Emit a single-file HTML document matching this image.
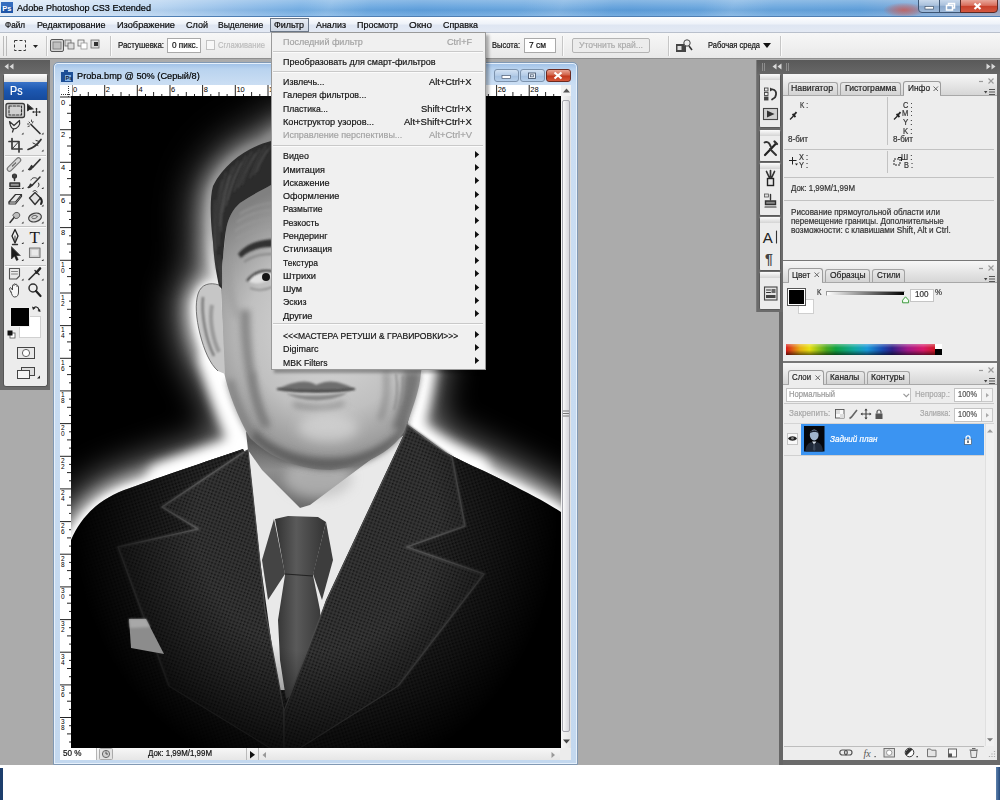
<!DOCTYPE html>
<html lang="ru">
<head>
<meta charset="utf-8">
<title>Adobe Photoshop CS3 Extended</title>
<style>
html,body{margin:0;padding:0;}
body{width:1000px;height:800px;overflow:hidden;background:#fff;position:relative;font-family:"Liberation Sans","DejaVu Sans",sans-serif;font-size:11px;color:#000;}
.abs{position:absolute;}
svg{display:block;overflow:visible;}
svg text{font-family:"Liberation Sans","DejaVu Sans",sans-serif;}
.t{position:absolute;white-space:nowrap;line-height:1;-webkit-text-stroke:0.2px currentColor;}
/* title bar */
#titlebar{left:0;top:0;width:1000px;height:17px;overflow:hidden;background:linear-gradient(90deg,#dce9f7 0%,#cfe1f5 8%,#b4d2f0 16%,#8dbbe8 24%,#6fabe2 31%,#5e9fdc 42%,#67a5de 52%,#5c9dda 63%,#69a6de 74%,#5f9fda 86%,#7aa6d6 93%,#9aa4c0 100%);border-bottom:1px solid #4f7fb4;box-sizing:border-box;}
#titlebar .sh{left:0;top:0;width:1000px;height:17px;background:linear-gradient(180deg,rgba(255,255,255,.28) 0,rgba(255,255,255,.08) 40%,rgba(0,0,0,.02) 60%,rgba(255,255,255,.18) 100%),linear-gradient(115deg,rgba(255,255,255,0) 30%,rgba(255,255,255,.16) 33%,rgba(255,255,255,0) 37%,rgba(255,255,255,0) 52%,rgba(255,255,255,.14) 56%,rgba(255,255,255,0) 61%,rgba(255,255,255,0) 70%,rgba(255,255,255,.12) 73%,rgba(255,255,255,0) 77%);}
#menubar{left:0;top:17px;width:1000px;height:16px;background:linear-gradient(180deg,#fdfeff 0,#eef2f9 45%,#dfe6f2 55%,#e3e9f4 100%);border-bottom:1px solid #b9c0cc;box-sizing:border-box;}
#menubar .t{top:3px;font-size:10.5px;color:#111;}
#optbar{left:0;top:33px;width:1000px;height:26px;background:linear-gradient(180deg,#f7f7f7 0,#f0f0f0 50%,#e8e8e8 100%);border-bottom:1px solid #8e8e8e;box-sizing:border-box;}
#work{left:0;top:59px;width:1000px;height:706px;background:#ababab;}
.sep{position:absolute;top:3px;width:1px;height:20px;background:#c6c6c6;border-right:1px solid #fafafa;}
.inp{position:absolute;background:#fff;border:1px solid #a9a9a9;box-sizing:border-box;font-size:9px;line-height:1;}
</style>
</head>
<body>
<div class="abs" id="titlebar"><div class="abs sh"></div>
<svg class="abs" style="left:1px;top:2px" width="12" height="12"><rect x="0" y="0" width="12" height="11" fill="#1f56a8"/><rect x="0" y="0" width="12" height="5" fill="#4a84d4" opacity=".5"/><text x="1.2" y="8.8" font-size="7.5" font-weight="bold" fill="#fff">Ps</text></svg>
<div class="t" style="left:17.0px;top:2.9px;font-size:9.8px;color:#000;transform:scaleX(0.932);transform-origin:0 0;">Adobe Photoshop CS3 Extended</div>
<div class="abs" style="left:884px;top:3px;width:40px;height:14px;background:radial-gradient(ellipse at center,rgba(214,84,70,.75) 0,rgba(214,84,70,.35) 45%,rgba(214,84,70,0) 75%);"></div>
<div class="abs" style="left:918px;top:-1px;width:22px;height:14px;border:1px solid #3e5674;border-radius:0 0 0 4px;background:linear-gradient(180deg,#c9d9ec 0,#a9c0dc 45%,#8aa8cc 50%,#9db8d8 100%);box-sizing:border-box;"></div>
<div class="abs" style="left:939px;top:-1px;width:22px;height:14px;border:1px solid #3e5674;background:linear-gradient(180deg,#c9d9ec 0,#a9c0dc 45%,#8aa8cc 50%,#9db8d8 100%);box-sizing:border-box;"></div>
<div class="abs" style="left:960px;top:-1px;width:37.5px;height:14px;border:1px solid #5a2a26;border-radius:0 0 4px 0;background:linear-gradient(180deg,#e8a79a 0,#d9705e 45%,#c7402a 52%,#d4573f 100%);box-sizing:border-box;"></div>
<svg class="abs" style="left:917px;top:0" width="83" height="14"><rect x="8" y="6.500" width="8.500" height="2.600" fill="#fff" stroke="#44546a" stroke-width=".7"/><path d="M29.500 5.500h6v4.500h-6zM31.500 5.500V3.500h6v4.500h-2" fill="none" stroke="#fff" stroke-width="1.500"/><path d="M57.500 3.500l6 5.500M63.500 3.500l-6 5.500" stroke="#fff" stroke-width="2.200"/></svg>
</div>
<div class="abs" id="menubar"></div>
<div class="abs" style="left:270px;top:18px;width:39px;height:14px;box-sizing:border-box;border:1px solid #6a7686;background:linear-gradient(180deg,#e6ebf3,#cdd5e2);"></div>
<div class="t" style="left:5.0px;top:19.9px;font-size:9.5px;color:#0a0a0a;transform:scaleX(0.856);transform-origin:0 0;">Файл</div>
<div class="t" style="left:36.5px;top:19.9px;font-size:9.5px;color:#0a0a0a;transform:scaleX(0.947);transform-origin:0 0;">Редактирование</div>
<div class="t" style="left:116.5px;top:19.9px;font-size:9.5px;color:#0a0a0a;transform:scaleX(0.969);transform-origin:0 0;">Изображение</div>
<div class="t" style="left:186.0px;top:19.9px;font-size:9.5px;color:#0a0a0a;transform:scaleX(0.952);transform-origin:0 0;">Слой</div>
<div class="t" style="left:218.4px;top:19.9px;font-size:9.5px;color:#0a0a0a;transform:scaleX(0.898);transform-origin:0 0;">Выделение</div>
<div class="t" style="left:274.4px;top:19.9px;font-size:9.5px;color:#0a0a0a;transform:scaleX(0.943);transform-origin:0 0;">Фильтр</div>
<div class="t" style="left:316.0px;top:19.9px;font-size:9.5px;color:#0a0a0a;transform:scaleX(0.935);transform-origin:0 0;">Анализ</div>
<div class="t" style="left:357.0px;top:19.9px;font-size:9.5px;color:#0a0a0a;transform:scaleX(0.945);transform-origin:0 0;">Просмотр</div>
<div class="t" style="left:409.0px;top:19.9px;font-size:9.5px;color:#0a0a0a;transform:scaleX(1.042);transform-origin:0 0;">Окно</div>
<div class="t" style="left:443.0px;top:19.9px;font-size:9.5px;color:#0a0a0a;transform:scaleX(0.939);transform-origin:0 0;">Справка</div>
<div class="abs" id="optbar">
<div class="abs" style="left:3px;top:3px;width:2px;height:20px;border-left:1px solid #bbb;border-right:1px solid #bbb;"></div>
<svg class="abs" style="left:12px;top:6px" width="30" height="16"><rect x="2.5" y="1.5" width="11" height="10" fill="none" stroke="#333" stroke-width="1" stroke-dasharray="3 2"/><path d="M21 6h5l-2.5 3z" fill="#222"/></svg>
<div class="sep" style="left:46px"></div>
<svg class="abs" style="left:50px;top:6px" width="56" height="16">
<rect x=".5" y=".5" width="13" height="12" rx="1.5" fill="#d4d4d4" stroke="#555"/><rect x="3" y="3" width="8" height="7" fill="#c0c0c0" stroke="#777" stroke-width=".8"/>
<rect x="15" y="1" width="6" height="6" fill="#ddd" stroke="#666" stroke-width=".8"/><rect x="18" y="4" width="6" height="6" fill="#ddd" stroke="#666" stroke-width=".8"/>
<rect x="28" y="1" width="6" height="6" fill="#eee" stroke="#666" stroke-width=".8"/><rect x="31" y="4" width="6" height="6" fill="#fff" stroke="#999" stroke-width=".8"/>
<rect x="41" y="1" width="8" height="8" fill="#ddd" stroke="#666" stroke-width=".8"/><rect x="44" y="3" width="4" height="4" fill="#333"/>
</svg>
<div class="sep" style="left:110px"></div>
</div>
<div class="t" style="left:118.0px;top:41.0px;font-size:8.6px;color:#111;transform:scaleX(0.916);transform-origin:0 0;">Растушевка:</div>
<div class="inp" style="left:167px;top:38px;width:34px;height:15px;"></div>
<div class="t" style="left:172.0px;top:41.0px;font-size:8.6px;color:#111;transform:scaleX(0.957);transform-origin:0 0;">0 пикс.</div>
<div class="abs" style="left:206px;top:40px;width:9px;height:10px;border:1px solid #c2c2c2;background:#f8f8f8;box-sizing:border-box;"></div>
<div class="t" style="left:218.0px;top:41.0px;font-size:8.6px;color:#bcbcbc;transform:scaleX(0.885);transform-origin:0 0;">Сглаживание</div>
<div class="t" style="left:492.0px;top:41.0px;font-size:8.6px;color:#111;transform:scaleX(0.877);transform-origin:0 0;">Высота:</div>
<div class="inp" style="left:524px;top:38px;width:32px;height:15px;"></div>
<div class="t" style="left:529.0px;top:41.0px;font-size:8.6px;color:#111;transform:scaleX(0.978);transform-origin:0 0;">7 см</div>
<div class="sep" style="left:562px;top:36px"></div>
<div class="abs" style="left:572px;top:38px;width:78px;height:15px;border:1px solid #b4b4b4;border-radius:2px;background:#ececec;box-sizing:border-box;"></div>
<div class="t" style="left:579.0px;top:41.0px;font-size:8.6px;color:#ababab;transform:scaleX(0.999);transform-origin:0 0;">Уточнить край...</div>
<div class="sep" style="left:668px;top:36px"></div>
<svg class="abs" style="left:675px;top:38px" width="20" height="16"><rect x="1" y="6" width="10" height="8" fill="#444"/><rect x="2.5" y="8" width="4" height="4" fill="#ddd"/><circle cx="12" cy="5" r="3.2" fill="#eee" stroke="#444" stroke-width="1"/><path d="M14 8l3 4" stroke="#333" stroke-width="1.6"/></svg>
<div class="t" style="left:708.0px;top:41.0px;font-size:8.6px;color:#111;transform:scaleX(0.873);transform-origin:0 0;">Рабочая среда</div>
<svg class="abs" style="left:763px;top:43px" width="10" height="6"><path d="M0 0h8l-4 5z" fill="#111"/></svg>
<div class="sep" style="left:780px;top:36px"></div>
<div class="abs" id="work"></div><div class="abs" style="left:0;top:60px;width:50px;height:330px;background:#6b6b6b;"></div>
<div class="abs" style="left:0;top:60px;width:50px;height:14px;background:linear-gradient(180deg,#5c5c5c,#6a6a6a);"></div>
<svg class="abs" style="left:4px;top:63px" width="12" height="8"><path d="M4.5 0.5v6L0.5 3.5zM9.5 0.5v6L5.5 3.5z" fill="#d8d8d8"/></svg>
<div class="abs" style="left:3px;top:74px;width:45px;height:313px;background:#ececec;border:1px solid #555;border-top-color:#fafafa;box-sizing:border-box;border-radius:2px 2px 3px 3px;"></div>
<div class="abs" style="left:4px;top:74px;width:43px;height:8px;background:linear-gradient(180deg,#fdfdfd,#dcdcdc);border-radius:2px 2px 0 0;"></div>
<div class="abs" style="left:4px;top:82px;width:43px;height:18px;background:linear-gradient(180deg,#3a73c8 0,#1c57b0 45%,#164a9c 100%);"></div>
<div class="t" style="left:10.0px;top:84.1px;font-size:13.5px;color:#fff;transform:scaleX(0.793);transform-origin:0 0;">Ps</div>
<div class="abs" style="left:5px;top:155px;width:41px;height:1px;background:#c4c4c4;border-bottom:1px solid #fafafa;"></div>
<div class="abs" style="left:5px;top:226px;width:41px;height:1px;background:#c4c4c4;border-bottom:1px solid #fafafa;"></div>
<div class="abs" style="left:5px;top:264.5px;width:41px;height:1px;background:#c4c4c4;border-bottom:1px solid #fafafa;"></div>
<svg class="abs" style="left:0;top:100px" width="50" height="200" viewBox="0 100 50 200">
<g fill="none" stroke="#333" stroke-width="1.2" stroke-linecap="round" stroke-linejoin="round">
<!-- marquee selected -->
<rect x="6" y="103.500" width="18.500" height="14" rx="2" fill="#d2d2d2" stroke="#3a3a3a" stroke-width="1.300"/>
<rect x="9" y="106" width="12.500" height="9" stroke="#333" stroke-width="1.100" stroke-dasharray="2.500 1.500"/>
<!-- move -->
<path d="M27.500 104.500V111L29.500 109.500L33 109Z" fill="#222" stroke="#222" stroke-width=".8"/>
<path d="M36.500 108.500v7M33 112h7" stroke-width="1.100"/>
<path d="M36.500 107.800l-1.300 1.500h2.600zM36.500 116.200l-1.300-1.500h2.600zM32.300 112l1.500-1.300v2.600zM40.700 112l-1.500-1.300v2.600z" fill="#222" stroke="none"/>
<!-- lasso -->
<path d="M9.500 121.500L14 125.500L19.500 120.500C20.500 125 18 128.500 13.500 129C11 128 10 125 9.500 121.500Z" stroke-width="1.200"/>
<path d="M13.500 129L12.500 132" stroke-width="1.300"/>
<!-- wand -->
<path d="M31 124.500L40 133.500" stroke-width="1.700"/><path d="M29 122l1 1M33 121.500l-.5 1.500M28 126.500l1.500-.5M31.500 120v1.500M27.500 124h1.500" stroke-width=".9"/>
<!-- crop -->
<path d="M12 138.500V149H22M9 141.500H19V152" stroke-width="1.700" stroke="#3a3a3a"/><path d="M12.500 148.500L18.500 142" stroke-width="1"/>
<!-- slice -->
<path d="M28 149.500C33 148 38 144 41 139.500" stroke-width="1.700"/><path d="M33 143l5 2.500M36 140.500l3.500 1" stroke-width="1"/>
<!-- healing -->
<path d="M9.500 169L18.500 160" stroke="#777" stroke-width="5.500"/><path d="M9.500 169L18.500 160" stroke="#d8d8d8" stroke-width="3.200"/><path d="M12.500 166l3-3" stroke="#666" stroke-width="1.400" stroke-dasharray="1 1"/>
<!-- brush -->
<path d="M40 159.500L33 167" stroke-width="1.700"/><path d="M33 167C31.500 169.500 29.500 170 28.500 169.500C30 168.500 30.500 167 31.500 165.500Z" fill="#333"/>
<!-- stamp -->
<path d="M14.500 176.500v4M10 183h9.500v3.500H10z" stroke-width="1.500" fill="#999"/><circle cx="14.500" cy="176" r="2" fill="#444"/><path d="M9.500 188.500h10.500" stroke-width="1.200"/>
<!-- history brush -->
<path d="M40 177L32 185.500" stroke-width="1.600"/><path d="M32 185.500C30.500 187.500 29 188 28 187.500C29.500 186.500 30 185.500 30.500 184Z" fill="#333"/><path d="M31 180C32 177.500 35 177 37 178.500" stroke-width="1"/><path d="M38.500 183c1 1.500 .5 3-.5 4" stroke-width="1"/>
<!-- eraser -->
<path d="M9 202L15.500 194.500H21.500L15.500 202Z" fill="#e6e6e6" stroke-width="1.200"/><path d="M9 202V204H15.500L21.500 196.500V194.500" stroke-width="1.200"/>
<!-- bucket -->
<path d="M29.500 198L35 192.500L40.500 198L35 204.500Z" fill="#e2e2e2" stroke-width="1.400"/><path d="M40.500 198C42 200 42 202.500 41 204" stroke-width="2" stroke="#222"/><path d="M33 191.500C34 190 36 190 37 192" stroke-width="1"/>
<!-- dodge/smudge -->
<path d="M10 222.500L14.500 217" stroke-width="1.500"/><path d="M13 215C14 212 18 211.500 19.500 214C20.500 216.500 18 219 15.500 218.500Z" fill="#bdbdbd" stroke="#555" stroke-width="1"/>
<!-- sponge -->
<ellipse cx="35" cy="217.500" rx="6.500" ry="4.300" fill="#d6d6d6" stroke="#444" stroke-width="1.200" transform="rotate(-15 35 217.500)"/><ellipse cx="34.500" cy="217" rx="2.800" ry="1.600" stroke="#666" stroke-width=".9" transform="rotate(-15 34.500 217)"/>
<!-- pen -->
<path d="M15 229.500L12 236L15 243L18 236Z" fill="#f2f2f2" stroke="#222" stroke-width="1.300"/><path d="M15 236v6" stroke-width="1"/><path d="M12.500 244.500h5" stroke-width="1.300"/>
<!-- path select arrow -->
<path d="M11.500 247V259L14.500 256L16.500 260.500L18.200 259.700L16.300 255.500H20Z" fill="#1c1c1c" stroke="#1c1c1c" stroke-width=".6"/>
<!-- shape -->
<rect x="29.500" y="248" width="10.500" height="9.500" fill="#cfcfcf" stroke="#777" stroke-width="1.100"/><rect x="31.500" y="250" width="6.500" height="5.500" fill="#e9e9e9" stroke="none"/>
<!-- notes -->
<path d="M9.500 268.500H19.500V276L16.500 279H9.500Z" fill="#e9e9e9" stroke="#555" stroke-width="1.100"/><path d="M11.500 271.500h6M11.500 274h6" stroke="#777" stroke-width=".9"/>
<!-- eyedropper -->
<path d="M29 279.500L36 272.500" stroke-width="1.700"/><path d="M35 270.500L39 274.500" stroke-width="1.500"/><path d="M36.500 272.500L40 268.500" stroke-width="2.600" stroke="#222"/>
<!-- hand -->
<path d="M11 292C9.500 290 9 288 10.500 287.500L12.500 290V285.500C12.500 284.500 14 284.500 14 285.500V284.500C14 283.500 15.500 283.500 15.500 284.500V285C15.500 284 17 284 17 285V286.500C17 285.500 18.500 285.500 18.500 286.500V292C18.500 295 17.500 297 14.500 297C12.500 297 12 294.500 11 292Z" fill="#f6f6f6" stroke="#444" stroke-width="1"/>
<!-- zoom -->
<circle cx="33" cy="288" r="4" fill="#eee" stroke="#333" stroke-width="1.500"/><path d="M36 291L40.500 296" stroke-width="2.200" stroke="#222"/>
</g>
<!-- T -->
<text x="29.500" y="242.500" font-size="17" style="font-family:'Liberation Serif','DejaVu Serif',serif" fill="#1a1a1a">T</text>
<!-- corner dots -->
<g fill="#222">
<path d="M21.500 134.500h2v-2zM41.500 134.500h2v-2zM41.500 151.500h2v-2zM21.500 171.500h2v-2zM41.500 171.500h2v-2zM21.500 189h2v-2zM41.500 189h2v-2zM21.500 206.500h2v-2zM41.500 206.500h2v-2zM21.500 223.500h2v-2zM41.500 223.500h2v-2zM21.500 244h2v-2zM41.500 244h2v-2zM21.500 261h2v-2zM41.500 261h2v-2zM21.500 280.500h2v-2zM41.500 280.500h2v-2z"/>
</g>
</svg>

<div class="abs" style="left:18.5px;top:316px;width:22px;height:22px;background:#fff;border:1px solid #d0d0d0;box-sizing:border-box;"></div>
<div class="abs" style="left:9.5px;top:307px;width:20px;height:19.5px;background:#000;border:1px solid #efefef;box-sizing:border-box;"></div>
<svg class="abs" style="left:32px;top:305px" width="9" height="9"><path d="M1.5 3.5C3 1 6 1.5 7 5" fill="none" stroke="#222" stroke-width="1.2"/><path d="M0 1.5l1 3.5l2.5-2zM8.5 7l-3-1l2.5-2z" fill="#222"/></svg>
<svg class="abs" style="left:7px;top:330px" width="9" height="9"><rect x="3" y="3" width="5" height="5" fill="#fff" stroke="#555" stroke-width=".8"/><rect x=".5" y=".5" width="5" height="5" fill="#111"/></svg>
<svg class="abs" style="left:17px;top:347px" width="18" height="12"><rect x=".5" y=".5" width="17" height="11" fill="#e8e8e8" stroke="#444"/><circle cx="9" cy="6" r="3.6" fill="#fff" stroke="#555" stroke-width=".9"/></svg>
<svg class="abs" style="left:17px;top:367px" width="24" height="13"><rect x="4.5" y=".5" width="13" height="8" fill="#ddd" stroke="#444"/><rect x=".5" y="3.5" width="12" height="8" fill="#f4f4f4" stroke="#444"/><path d="M20 10.5h3v-3z" fill="#222" transform="translate(0,1)"/></svg><div class="abs" style="left:53px;top:62px;width:525px;height:703px;border-radius:5px 5px 0 0;background:linear-gradient(180deg,#9dbfe6 0,#b9d3ef 6px,#cbdef3 22px,#c3d8ef 100%);border:1px solid #8199b4;box-sizing:border-box;box-shadow:inset 0 0 0 1px #e6f0fb;"></div>
<svg class="abs" style="left:61px;top:69px" width="13" height="14"><path d="M0 3h3V1h4v2h5v10H0z" fill="#1d4f97"/><rect x="4" y="6" width="6" height="6" fill="#7fb0e6"/><text x="4.6" y="11.3" font-size="5.5" font-weight="bold" fill="#123">Ps</text></svg>
<div class="t" style="left:76.8px;top:70.8px;font-size:9.8px;color:#000;transform:scaleX(0.938);transform-origin:0 0;">Proba.bmp @ 50% (Серый/8)</div>
<div class="abs" style="left:494px;top:69px;width:24.5px;height:13px;border:1px solid #7d93ad;border-radius:3px;background:linear-gradient(180deg,#d3e2f3,#b3cbe6 50%,#a4c0e0 51%,#b6cfea);box-sizing:border-box;"></div>
<div class="abs" style="left:520px;top:69px;width:24.5px;height:13px;border:1px solid #7d93ad;border-radius:3px;background:linear-gradient(180deg,#d3e2f3,#b3cbe6 50%,#a4c0e0 51%,#b6cfea);box-sizing:border-box;"></div>
<div class="abs" style="left:546px;top:69px;width:24.5px;height:13px;border:1px solid #6d2a20;border-radius:3px;background:linear-gradient(180deg,#e9a595,#d2634a 45%,#c1381d 55%,#d5573a);box-sizing:border-box;"></div>
<svg class="abs" style="left:494px;top:69px" width="77" height="13"><rect x="8" y="6.5" width="8.5" height="3" fill="#fff" stroke="#4a5a70" stroke-width=".7"/><rect x="34.5" y="4" width="7" height="5.5" fill="#e9f0f8" stroke="#4a5a70" stroke-width=".9"/><rect x="36.5" y="5.8" width="3" height="2" fill="none" stroke="#4a5a70" stroke-width=".7"/><path d="M60.5 3.5l7 6M67.5 3.5l-7 6" stroke="#fff" stroke-width="2.2"/></svg>
<div class="abs" style="left:60px;top:85px;width:511px;height:675px;background:#f0f0f0;"></div>
<svg class="abs" style="left:60px;top:85px" width="501" height="12" viewBox="60 85 501 12"><rect x="60" y="85" width="501" height="12" fill="#fff"/><rect x="71.5" y="85" width="1" height="12" fill="#222"/><text x="73.1" y="92" font-size="7.5" fill="#000">0</text><rect x="79.7" y="94" width="1" height="3" fill="#222"/><rect x="87.8" y="92" width="1" height="5" fill="#222"/><rect x="96.0" y="94" width="1" height="3" fill="#222"/><rect x="104.2" y="85" width="1" height="12" fill="#222"/><text x="105.8" y="92" font-size="7.5" fill="#000">2</text><rect x="112.3" y="94" width="1" height="3" fill="#222"/><rect x="120.5" y="92" width="1" height="5" fill="#222"/><rect x="128.7" y="94" width="1" height="3" fill="#222"/><rect x="136.8" y="85" width="1" height="12" fill="#222"/><text x="138.4" y="92" font-size="7.5" fill="#000">4</text><rect x="145.0" y="94" width="1" height="3" fill="#222"/><rect x="153.1" y="92" width="1" height="5" fill="#222"/><rect x="161.3" y="94" width="1" height="3" fill="#222"/><rect x="169.5" y="85" width="1" height="12" fill="#222"/><text x="171.1" y="92" font-size="7.5" fill="#000">6</text><rect x="177.6" y="94" width="1" height="3" fill="#222"/><rect x="185.8" y="92" width="1" height="5" fill="#222"/><rect x="194.0" y="94" width="1" height="3" fill="#222"/><rect x="202.1" y="85" width="1" height="12" fill="#222"/><text x="203.7" y="92" font-size="7.5" fill="#000">8</text><rect x="210.3" y="94" width="1" height="3" fill="#222"/><rect x="218.5" y="92" width="1" height="5" fill="#222"/><rect x="226.6" y="94" width="1" height="3" fill="#222"/><rect x="234.8" y="85" width="1" height="12" fill="#222"/><text x="236.4" y="92" font-size="7.5" fill="#000">10</text><rect x="243.0" y="94" width="1" height="3" fill="#222"/><rect x="251.1" y="92" width="1" height="5" fill="#222"/><rect x="259.3" y="94" width="1" height="3" fill="#222"/><rect x="267.5" y="85" width="1" height="12" fill="#222"/><text x="269.1" y="92" font-size="7.5" fill="#000">12</text><rect x="275.6" y="94" width="1" height="3" fill="#222"/><rect x="283.8" y="92" width="1" height="5" fill="#222"/><rect x="292.0" y="94" width="1" height="3" fill="#222"/><rect x="300.1" y="85" width="1" height="12" fill="#222"/><text x="301.7" y="92" font-size="7.5" fill="#000">14</text><rect x="308.3" y="94" width="1" height="3" fill="#222"/><rect x="316.4" y="92" width="1" height="5" fill="#222"/><rect x="324.6" y="94" width="1" height="3" fill="#222"/><rect x="332.8" y="85" width="1" height="12" fill="#222"/><text x="334.4" y="92" font-size="7.5" fill="#000">16</text><rect x="340.9" y="94" width="1" height="3" fill="#222"/><rect x="349.1" y="92" width="1" height="5" fill="#222"/><rect x="357.3" y="94" width="1" height="3" fill="#222"/><rect x="365.4" y="85" width="1" height="12" fill="#222"/><text x="367.0" y="92" font-size="7.5" fill="#000">18</text><rect x="373.6" y="94" width="1" height="3" fill="#222"/><rect x="381.8" y="92" width="1" height="5" fill="#222"/><rect x="389.9" y="94" width="1" height="3" fill="#222"/><rect x="398.1" y="85" width="1" height="12" fill="#222"/><text x="399.7" y="92" font-size="7.5" fill="#000">20</text><rect x="406.3" y="94" width="1" height="3" fill="#222"/><rect x="414.4" y="92" width="1" height="5" fill="#222"/><rect x="422.6" y="94" width="1" height="3" fill="#222"/><rect x="430.8" y="85" width="1" height="12" fill="#222"/><text x="432.4" y="92" font-size="7.5" fill="#000">22</text><rect x="438.9" y="94" width="1" height="3" fill="#222"/><rect x="447.1" y="92" width="1" height="5" fill="#222"/><rect x="455.3" y="94" width="1" height="3" fill="#222"/><rect x="463.4" y="85" width="1" height="12" fill="#222"/><text x="465.0" y="92" font-size="7.5" fill="#000">24</text><rect x="471.6" y="94" width="1" height="3" fill="#222"/><rect x="479.7" y="92" width="1" height="5" fill="#222"/><rect x="487.9" y="94" width="1" height="3" fill="#222"/><rect x="496.1" y="85" width="1" height="12" fill="#222"/><text x="497.7" y="92" font-size="7.5" fill="#000">26</text><rect x="504.2" y="94" width="1" height="3" fill="#222"/><rect x="512.4" y="92" width="1" height="5" fill="#222"/><rect x="520.6" y="94" width="1" height="3" fill="#222"/><rect x="528.7" y="85" width="1" height="12" fill="#222"/><text x="530.3" y="92" font-size="7.5" fill="#000">28</text><rect x="536.9" y="94" width="1" height="3" fill="#222"/><rect x="545.1" y="92" width="1" height="5" fill="#222"/><rect x="553.2" y="94" width="1" height="3" fill="#222"/></svg>
<svg class="abs" style="left:60px;top:85px" width="12" height="663" viewBox="60 85 12 663"><rect x="60" y="85" width="12" height="663" fill="#fff"/><rect x="60" y="96.5" width="12" height="1" fill="#222"/><text x="61" y="104.5" font-size="7.5" fill="#000">0</text><rect x="69" y="104.7" width="3" height="1" fill="#222"/><rect x="67" y="112.8" width="5" height="1" fill="#222"/><rect x="69" y="121.0" width="3" height="1" fill="#222"/><rect x="60" y="129.2" width="12" height="1" fill="#222"/><text x="61" y="137.2" font-size="7.5" fill="#000">2</text><rect x="69" y="137.3" width="3" height="1" fill="#222"/><rect x="67" y="145.5" width="5" height="1" fill="#222"/><rect x="69" y="153.7" width="3" height="1" fill="#222"/><rect x="60" y="161.8" width="12" height="1" fill="#222"/><text x="61" y="169.8" font-size="7.5" fill="#000">4</text><rect x="69" y="170.0" width="3" height="1" fill="#222"/><rect x="67" y="178.1" width="5" height="1" fill="#222"/><rect x="69" y="186.3" width="3" height="1" fill="#222"/><rect x="60" y="194.5" width="12" height="1" fill="#222"/><text x="61" y="202.5" font-size="7.5" fill="#000">6</text><rect x="69" y="202.6" width="3" height="1" fill="#222"/><rect x="67" y="210.8" width="5" height="1" fill="#222"/><rect x="69" y="219.0" width="3" height="1" fill="#222"/><rect x="60" y="227.1" width="12" height="1" fill="#222"/><text x="61" y="235.1" font-size="7.5" fill="#000">8</text><rect x="69" y="235.3" width="3" height="1" fill="#222"/><rect x="67" y="243.5" width="5" height="1" fill="#222"/><rect x="69" y="251.6" width="3" height="1" fill="#222"/><rect x="60" y="259.8" width="12" height="1" fill="#222"/><text x="61" y="266.8" font-size="6.5" fill="#000">1</text><text x="61" y="272.8" font-size="6.5" fill="#000">0</text><rect x="69" y="268.0" width="3" height="1" fill="#222"/><rect x="67" y="276.1" width="5" height="1" fill="#222"/><rect x="69" y="284.3" width="3" height="1" fill="#222"/><rect x="60" y="292.5" width="12" height="1" fill="#222"/><text x="61" y="299.5" font-size="6.5" fill="#000">1</text><text x="61" y="305.5" font-size="6.5" fill="#000">2</text><rect x="69" y="300.6" width="3" height="1" fill="#222"/><rect x="67" y="308.8" width="5" height="1" fill="#222"/><rect x="69" y="317.0" width="3" height="1" fill="#222"/><rect x="60" y="325.1" width="12" height="1" fill="#222"/><text x="61" y="332.1" font-size="6.5" fill="#000">1</text><text x="61" y="338.1" font-size="6.5" fill="#000">4</text><rect x="69" y="333.3" width="3" height="1" fill="#222"/><rect x="67" y="341.4" width="5" height="1" fill="#222"/><rect x="69" y="349.6" width="3" height="1" fill="#222"/><rect x="60" y="357.8" width="12" height="1" fill="#222"/><text x="61" y="364.8" font-size="6.5" fill="#000">1</text><text x="61" y="370.8" font-size="6.5" fill="#000">6</text><rect x="69" y="365.9" width="3" height="1" fill="#222"/><rect x="67" y="374.1" width="5" height="1" fill="#222"/><rect x="69" y="382.3" width="3" height="1" fill="#222"/><rect x="60" y="390.4" width="12" height="1" fill="#222"/><text x="61" y="397.4" font-size="6.5" fill="#000">1</text><text x="61" y="403.4" font-size="6.5" fill="#000">8</text><rect x="69" y="398.6" width="3" height="1" fill="#222"/><rect x="67" y="406.8" width="5" height="1" fill="#222"/><rect x="69" y="414.9" width="3" height="1" fill="#222"/><rect x="60" y="423.1" width="12" height="1" fill="#222"/><text x="61" y="430.1" font-size="6.5" fill="#000">2</text><text x="61" y="436.1" font-size="6.5" fill="#000">0</text><rect x="69" y="431.3" width="3" height="1" fill="#222"/><rect x="67" y="439.4" width="5" height="1" fill="#222"/><rect x="69" y="447.6" width="3" height="1" fill="#222"/><rect x="60" y="455.8" width="12" height="1" fill="#222"/><text x="61" y="462.8" font-size="6.5" fill="#000">2</text><text x="61" y="468.8" font-size="6.5" fill="#000">2</text><rect x="69" y="463.9" width="3" height="1" fill="#222"/><rect x="67" y="472.1" width="5" height="1" fill="#222"/><rect x="69" y="480.3" width="3" height="1" fill="#222"/><rect x="60" y="488.4" width="12" height="1" fill="#222"/><text x="61" y="495.4" font-size="6.5" fill="#000">2</text><text x="61" y="501.4" font-size="6.5" fill="#000">4</text><rect x="69" y="496.6" width="3" height="1" fill="#222"/><rect x="67" y="504.7" width="5" height="1" fill="#222"/><rect x="69" y="512.9" width="3" height="1" fill="#222"/><rect x="60" y="521.1" width="12" height="1" fill="#222"/><text x="61" y="528.1" font-size="6.5" fill="#000">2</text><text x="61" y="534.1" font-size="6.5" fill="#000">6</text><rect x="69" y="529.2" width="3" height="1" fill="#222"/><rect x="67" y="537.4" width="5" height="1" fill="#222"/><rect x="69" y="545.6" width="3" height="1" fill="#222"/><rect x="60" y="553.7" width="12" height="1" fill="#222"/><text x="61" y="560.7" font-size="6.5" fill="#000">2</text><text x="61" y="566.7" font-size="6.5" fill="#000">8</text><rect x="69" y="561.9" width="3" height="1" fill="#222"/><rect x="67" y="570.1" width="5" height="1" fill="#222"/><rect x="69" y="578.2" width="3" height="1" fill="#222"/><rect x="60" y="586.4" width="12" height="1" fill="#222"/><text x="61" y="593.4" font-size="6.5" fill="#000">3</text><text x="61" y="599.4" font-size="6.5" fill="#000">0</text><rect x="69" y="594.6" width="3" height="1" fill="#222"/><rect x="67" y="602.7" width="5" height="1" fill="#222"/><rect x="69" y="610.9" width="3" height="1" fill="#222"/><rect x="60" y="619.1" width="12" height="1" fill="#222"/><text x="61" y="626.1" font-size="6.5" fill="#000">3</text><text x="61" y="632.1" font-size="6.5" fill="#000">2</text><rect x="69" y="627.2" width="3" height="1" fill="#222"/><rect x="67" y="635.4" width="5" height="1" fill="#222"/><rect x="69" y="643.6" width="3" height="1" fill="#222"/><rect x="60" y="651.7" width="12" height="1" fill="#222"/><text x="61" y="658.7" font-size="6.5" fill="#000">3</text><text x="61" y="664.7" font-size="6.5" fill="#000">4</text><rect x="69" y="659.9" width="3" height="1" fill="#222"/><rect x="67" y="668.0" width="5" height="1" fill="#222"/><rect x="69" y="676.2" width="3" height="1" fill="#222"/><rect x="60" y="684.4" width="12" height="1" fill="#222"/><text x="61" y="691.4" font-size="6.5" fill="#000">3</text><text x="61" y="697.4" font-size="6.5" fill="#000">6</text><rect x="69" y="692.5" width="3" height="1" fill="#222"/><rect x="67" y="700.7" width="5" height="1" fill="#222"/><rect x="69" y="708.9" width="3" height="1" fill="#222"/><rect x="60" y="717.0" width="12" height="1" fill="#222"/><text x="61" y="724.0" font-size="6.5" fill="#000">3</text><text x="61" y="730.0" font-size="6.5" fill="#000">8</text><rect x="69" y="725.2" width="3" height="1" fill="#222"/><rect x="67" y="733.4" width="5" height="1" fill="#222"/><rect x="69" y="741.5" width="3" height="1" fill="#222"/><rect x="60" y="85" width="11" height="11" fill="#fff"/><path d="M61 94.5H71M68.5 86V97" stroke="#333" stroke-width="1" stroke-dasharray="1 1" fill="none"/></svg>
<div class="abs" style="left:71px;top:96px;width:490px;height:652px;background:#000;overflow:hidden;"><svg class="abs" style="left:0;top:0" width="490" height="652" viewBox="71 96 490 652">
<defs>
<filter id="gb1" filterUnits="userSpaceOnUse" x="0" y="0" width="700" height="900"><feGaussianBlur stdDeviation="9"/></filter>
<filter id="gb0" filterUnits="userSpaceOnUse" x="0" y="0" width="700" height="900"><feGaussianBlur stdDeviation="17"/></filter>
<filter id="gb2" filterUnits="userSpaceOnUse" x="0" y="0" width="700" height="900"><feGaussianBlur stdDeviation="3.5"/></filter>
<filter id="b1" filterUnits="userSpaceOnUse" x="0" y="0" width="700" height="900"><feGaussianBlur stdDeviation="1.2"/></filter>
<filter id="b3" filterUnits="userSpaceOnUse" x="0" y="0" width="700" height="900"><feGaussianBlur stdDeviation="3"/></filter>
<filter id="b6" filterUnits="userSpaceOnUse" x="0" y="0" width="700" height="900"><feGaussianBlur stdDeviation="6"/></filter>
<pattern id="tw" width="3.400" height="3.400" patternUnits="userSpaceOnUse" patternTransform="rotate(-18)"><rect width="3.400" height="3.400" fill="#252525"/><rect width="1.300" height="1.300" fill="#0e0e0e"/><rect x="1.700" y="1.700" width="1.200" height="1.200" fill="#333"/></pattern><pattern id="tw2" width="3.400" height="3.400" patternUnits="userSpaceOnUse" patternTransform="rotate(20)"><rect width="3.400" height="3.400" fill="#2f2f2f"/><rect width="1.300" height="1.300" fill="#121212"/><rect x="1.700" y="1.700" width="1.200" height="1.200" fill="#3c3c3c"/></pattern>
<radialGradient id="faceg" cx="330" cy="330" r="150" gradientUnits="userSpaceOnUse"><stop offset="0" stop-color="#dcdcdc"/><stop offset=".55" stop-color="#c0c0c0"/><stop offset="1" stop-color="#808080"/></radialGradient>
<linearGradient id="neckg" x1="0" y1="440" x2="0" y2="507" gradientUnits="userSpaceOnUse"><stop offset="0" stop-color="#5a5a5a"/><stop offset=".45" stop-color="#8e8e8e"/><stop offset="1" stop-color="#6a6a6a"/></linearGradient>
<linearGradient id="tieg" x1="272" y1="0" x2="326" y2="0" gradientUnits="userSpaceOnUse"><stop offset="0" stop-color="#2c2c2c"/><stop offset=".45" stop-color="#5a5a5a"/><stop offset="1" stop-color="#333"/></linearGradient>
<radialGradient id="vig" cx="316" cy="520" r="1" gradientUnits="userSpaceOnUse" gradientTransform="translate(316 520) scale(242 264) translate(-316 -520)"><stop offset="0" stop-color="#fff"/><stop offset=".5" stop-color="#fff"/><stop offset=".78" stop-color="#777"/><stop offset="1" stop-color="#000"/></radialGradient>
<linearGradient id="glg" x1="0" y1="150" x2="0" y2="300" gradientUnits="userSpaceOnUse"><stop offset="0" stop-color="#8a8a8a"/><stop offset=".55" stop-color="#b5b5b5"/><stop offset="1" stop-color="#fff"/></linearGradient><mask id="gm" maskUnits="userSpaceOnUse" x="71" y="96" width="490" height="652"><rect x="71" y="96" width="490" height="652" fill="url(#glg)"/></mask>
<mask id="vm" maskUnits="userSpaceOnUse" x="71" y="96" width="490" height="652"><rect x="71" y="96" width="490" height="652" fill="url(#vig)"/></mask>
<path id="sil" d="M262 143C240 150 220 166 212 190C208 210 210 240 213 262L218 284C208 280 198 288 196 308C197 334 206 358 219 373C226 395 236 418 246 436L243 449C205 462 160 477 130 488C100 498 82 515 71 540V800H561V512C540 498 510 484 484 471C455 458 430 446 410 428C414 410 420 390 421 372C428 335 432 290 430 240C428 170 390 120 330 116C300 116 280 128 262 143Z"/>
</defs>
<rect x="71" y="96" width="490" height="652" fill="#000"/>
<!-- glow -->
<g mask="url(#gm)">
<use href="#sil" fill="#fff" stroke="#fff" stroke-width="42" stroke-linejoin="round" filter="url(#gb0)" opacity=".5"/>
<use href="#sil" fill="#fff" stroke="#fff" stroke-width="16" stroke-linejoin="round" filter="url(#gb1)" opacity=".9"/>
<path d="M212 360C218 385 232 420 243 447C215 457 185 467 160 476" fill="none" stroke="#fff" stroke-width="24" stroke-linejoin="round" stroke-linecap="round" filter="url(#b6)"/><path d="M424 368C420 395 416 412 411 428C430 445 452 457 478 468" fill="none" stroke="#fff" stroke-width="22" stroke-linejoin="round" stroke-linecap="round" filter="url(#b6)"/>
<use href="#sil" fill="#fff" stroke="#fff" stroke-width="6" stroke-linejoin="round" filter="url(#gb2)"/>
</g>
<path d="M243 449C205 462 160 477 130 488C100 498 82 515 71 540V748H561V512C540 498 510 484 484 471C455 458 430 446 406 424L300 600Z" fill="#000"/>
<rect x="486" y="96" width="75" height="262" fill="#000"/>
<!-- body group with vignette -->
<g mask="url(#vm)">
<!-- suit -->
<path d="M243 449C205 462 160 477 130 488C100 498 82 515 71 540V748H561V512C540 498 510 484 484 471C455 458 430 446 406 424L300 600Z" fill="url(#tw)"/>
<path d="M243 449C205 462 160 477 130 488C100 498 82 515 71 540V748H561V512C540 498 510 484 484 471C455 458 430 446 406 424L300 600Z" fill="#000" opacity=".12"/>
<!-- shirt -->
<path d="M248 449L260 560L278 690L296 690L326 600L405 432L310 505L300 508L262 470Z" fill="#e9e9e9"/>
<!-- tie -->
<path d="M275 519L288 516L318 517L326 522L313 575L320 610L323 650L300 690L286 699L280 660L278 620L285 575Z" fill="url(#tieg)"/>
<path d="M285 574L313 576" stroke="#222" stroke-width="1.2" fill="none"/>
<path d="M274 519L262 560L268 600L285 574Z" fill="#444"/>
<path d="M326 522L333 560L322 600L313 574Z" fill="#3d3d3d"/>
<!-- lapels -->
<path d="M244 452L162 507L198 529L118 547L169 686L270 748H284L284 711L265 610L248 450Z" fill="url(#tw2)" stroke="#4d4d4d" stroke-width="1.2"/>
<path d="M406 424L452 457L465 526L407 547L484 574L398 686L300 748H284L284 711L326 602L404 436Z" fill="url(#tw2)" stroke="#4d4d4d" stroke-width="1.2"/>
<path d="M244 452L162 507L198 529L118 547L169 686" fill="none" stroke="#5a5a5a" stroke-width="1.6" filter="url(#b1)"/>
<path d="M406 424L452 457L465 526L407 547L484 574L398 686" fill="none" stroke="#555" stroke-width="1.6" filter="url(#b1)"/>
</g>
<!-- pocket square -->
<path d="M129 619L146 619L164 654L131 648Z" fill="#8c8c8c"/><path d="M129 619L146 619L150 627L130 628Z" fill="#a8a8a8" filter="url(#b1)"/>
<!-- neck -->
<path d="M246 432L248 450L262 470L300 508L310 505L405 434L412 405L330 450Z" fill="url(#neckg)"/>
<ellipse cx="318" cy="478" rx="34" ry="20" fill="#bdbdbd" opacity=".7" filter="url(#b6)"/>
<!-- face -->
<path d="M271 185C262 190 250 196 240 203C233 209 228 218 226 230L223 258L221 290L224 372C228 392 238 418 250 438C270 458 300 470 330 470C362 468 392 452 404 432C412 410 420 390 421 372L452 240L400 150Z" fill="url(#faceg)"/>
<!-- under-chin shadow & chin shading -->
<path d="M250 438C270 458 300 470 330 470C362 468 392 452 404 432L408 420C390 445 360 458 330 458C300 458 272 448 254 428Z" fill="#555" filter="url(#b3)" opacity=".8"/>
<path d="M240 310C240 350 246 390 262 428L270 424C256 392 250 350 250 310Z" fill="#777" filter="url(#b3)" opacity=".75"/><path d="M226 380C230 400 240 422 250 438L256 434C246 416 238 398 234 380Z" fill="#7a7a7a" filter="url(#b3)" opacity=".7"/>
<path d="M421 372C418 395 410 415 404 432L392 428C400 405 404 390 404 372Z" fill="#666" filter="url(#b3)" opacity=".8"/>
<!-- mouth -->
<path d="M277 389C290 383 302 380 309 382C313 383 315 384 316 385C318 384 321 383 325 382C334 380 345 384 355 389C340 393 300 394 277 389Z" fill="#6e6e6e" filter="url(#b1)"/>
<path d="M277 389C300 392 335 392 355 389" stroke="#2e2e2e" stroke-width="1.600" fill="none" filter="url(#b1)"/>
<path d="M286 393C300 403 335 403 348 392C335 396 300 397 286 393Z" fill="#8a8a8a" filter="url(#b1)"/>
<path d="M293 404C308 409 330 409 344 403" stroke="#7d7d7d" stroke-width="3.500" fill="none" filter="url(#b3)"/>
<ellipse cx="328" cy="428" rx="30" ry="14" fill="#e2e2e2" opacity=".55" filter="url(#b6)"/>
<!-- folds -->
<path d="M253 372C252 392 258 412 268 428" stroke="#767676" stroke-width="3" fill="none" filter="url(#b3)"/>
<path d="M386 372C388 390 386 405 380 420" stroke="#767676" stroke-width="3" fill="none" filter="url(#b3)"/>
<path d="M396 374C398 388 397 400 394 410M403 376C404 388 403 396 401 404" stroke="#8a8a8a" stroke-width="1.500" fill="none" filter="url(#b1)"/>
<!-- ear -->
<path d="M219 285C210 282 201 284 198 294C195 304 196 318 200 334C204 350 210 364 218 371L225 374L221 290Z" fill="#c6c6c6"/>
<path d="M203 297C201 315 206 340 214 356" stroke="#7a7a7a" stroke-width="2.500" fill="none" filter="url(#b1)"/>
<path d="M212 305C209 320 213 340 219 352" stroke="#9a9a9a" stroke-width="4" fill="none" filter="url(#b1)"/>
<path d="M219 285C210 282 201 284 198 294C195 304 196 318 200 334C204 350 210 364 218 371" stroke="#555" stroke-width=".8" fill="none"/>
<!-- hair -->
<path d="M271 141C252 146 226 160 213 186C209 200 211 226 213 242C214 262 217 276 219 286L222 289C222 275 222 264 223 258C224 245 225 236 226 230C228 218 233 209 240 203C250 196 262 190 271 185L300 170L452 240C452 170 400 118 330 116C310 116 290 125 271 141Z" fill="#2c2c2c"/>
<!-- hair strands -->
<g stroke="#4e4e4e" stroke-width="1.100" fill="none" filter="url(#b1)" opacity=".9">
<path d="M222 180C217 200 215 225 216 250M226 172C220 195 218 220 219 246M233 166C225 185 221 205 220 226M238 161C230 178 225 196 223 212M246 156C237 170 231 186 228 200M252 152C244 164 238 178 234 192M260 149C252 160 246 172 242 185M266 146C259 156 254 166 250 178M271 146C265 154 260 163 257 172M215 200C213 220 214 245 217 270M219 255C219 265 220 275 221 284"/>
</g>
<g stroke="#6a6a6a" stroke-width=".9" fill="none" filter="url(#b1)" opacity=".8">
<path d="M230 175C224 192 221 212 221 232M242 162C234 176 229 192 226 206M256 153C248 164 242 176 238 188M268 149C262 157 257 166 254 175"/>
</g>
<!-- forehead wrinkles -->
<g stroke="#9a9a9a" stroke-width="1.200" fill="none" filter="url(#b1)">
<path d="M240 214C250 207 262 204 272 203M237 222C248 214 261 211 272 210M235 231C247 223 260 219 272 218M236 239C247 232 260 228 272 227"/>
</g>
<!-- eyebrow / eye -->
<path d="M238 254C246 244 258 240 272 239L272 247C260 247 249 250 241 258Z" fill="#333" filter="url(#b1)"/>
<path d="M244 262C252 256 262 254 272 254" stroke="#888" stroke-width="2" fill="none" filter="url(#b1)"/>
<path d="M248 281C255 272 265 270 274 273C268 283 256 286 248 281Z" fill="#e0e0e0" filter="url(#b1)"/>
<path d="M247 281C254 271 265 269 274 272" stroke="#2a2a2a" stroke-width="1.800" fill="none" filter="url(#b1)"/>
<circle cx="266" cy="277" r="4" fill="#161616"/>
<path d="M250 288C258 291 266 290 272 287" stroke="#8a8a8a" stroke-width="1.500" fill="none" filter="url(#b1)"/>
<path d="M226 262C228 280 230 300 238 318" stroke="#9a9a9a" stroke-width="5" fill="none" filter="url(#b3)" opacity=".7"/>
</svg>
</div>
<div class="abs" style="left:561px;top:85px;width:10px;height:663px;background:linear-gradient(90deg,#f6f6f6,#e3e3e3);"></div>
<div class="abs" style="left:561px;top:85px;width:10px;height:11px;background:#f2f2f2;"></div>
<svg class="abs" style="left:563px;top:88px" width="7" height="5"><path d="M0 4.5L3.5 0.5L7 4.5z" fill="#555"/></svg>
<div class="abs" style="left:562px;top:100px;width:8px;height:632px;background:linear-gradient(90deg,#fbfbfb,#e6e6ea 50%,#d6d6dc);border:1px solid #a5a5ad;border-radius:2px;box-sizing:border-box;"></div>
<svg class="abs" style="left:563px;top:410px" width="6" height="8"><path d="M0 1h6M0 3.5h6M0 6h6" stroke="#777" stroke-width="1"/></svg>
<svg class="abs" style="left:563px;top:739px" width="7" height="5"><path d="M0 0.5L3.5 4.5L7 0.5z" fill="#444"/></svg>
<div class="abs" style="left:60px;top:748px;width:511px;height:12px;background:linear-gradient(180deg,#f7f7f7,#e6e6e6);"></div>
<div class="abs" style="left:60px;top:748px;width:37px;height:12px;background:#fff;border-right:1px solid #b5b5b5;box-sizing:border-box;"></div>
<div class="t" style="left:62.5px;top:749.3px;font-size:8.6px;color:#111;transform:scaleX(0.944);transform-origin:0 0;">50 %</div>
<svg class="abs" style="left:99px;top:748px" width="14" height="12"><rect x=".5" y=".5" width="13" height="11" rx="1" fill="#e2e2e2" stroke="#aaa"/><circle cx="7" cy="6" r="3.6" fill="#cfcfcf" stroke="#666"/><path d="M7 3.5V6H9" stroke="#444" stroke-width=".9" fill="none"/></svg>
<div class="t" style="left:148.0px;top:749.3px;font-size:8.6px;color:#111;transform:scaleX(0.922);transform-origin:0 0;">Док: 1,99M/1,99M</div>
<div class="abs" style="left:246px;top:748px;width:13px;height:12px;border-left:1px solid #bbb;border-right:1px solid #bbb;box-sizing:border-box;"></div>
<svg class="abs" style="left:250px;top:750.5px" width="6" height="8"><path d="M0 0L5 3.7L0 7.5z" fill="#111"/></svg>
<svg class="abs" style="left:262px;top:751.5px" width="5" height="6"><path d="M4 0L0.5 3L4 6z" fill="#999"/></svg>
<svg class="abs" style="left:551px;top:751.5px" width="5" height="6"><path d="M0.5 0L4 3L0.5 6z" fill="#999"/></svg>
<div class="abs" style="left:560px;top:748px;width:11px;height:12px;background:#ececec;"></div><div class="abs" style="left:757px;top:60px;width:243px;height:705px;background:#6b6b6b;"></div>
<div class="abs" style="left:757px;top:60px;width:243px;height:14px;background:linear-gradient(180deg,#595959,#676767);"></div>
<div class="abs" style="left:757px;top:312px;width:22px;height:453px;background:#ababab;"></div><div class="abs" style="left:756px;top:60px;width:1px;height:252px;background:#7a7a7a;"></div>
<div class="abs" style="left:779px;top:312px;width:4px;height:453px;background:#666;"></div>
<svg class="abs" style="left:762px;top:63px" width="30" height="8"><path d="M.5 0v8M2.5 0v8M24.5 0v8M26.5 0v8" stroke="#8d8d8d" stroke-width="1"/><path d="M14.5 0.5v6L10.5 3.5zM19.5 0.5v6L15.5 3.5z" fill="#d8d8d8"/></svg>
<svg class="abs" style="left:986px;top:63px" width="10" height="8"><path d="M0.5 0.5v6L4.5 3.5zM5.5 0.5v6L9.5 3.5z" fill="#d8d8d8"/></svg>
<div class="abs" style="left:759px;top:74px;width:22px;height:54px;background:#ececec;border:1px solid #5a5a5a;border-top-color:#f8f8f8;border-radius:2px;box-sizing:border-box;"></div>
<div class="abs" style="left:760px;top:74px;width:20px;height:6px;background:linear-gradient(180deg,#fcfcfc,#d4d4d4);border-radius:2px 2px 0 0;"></div>
<div class="abs" style="left:759px;top:129.5px;width:22px;height:32.0px;background:#ececec;border:1px solid #5a5a5a;border-top-color:#f8f8f8;border-radius:2px;box-sizing:border-box;"></div>
<div class="abs" style="left:760px;top:129.5px;width:20px;height:6px;background:linear-gradient(180deg,#fcfcfc,#d4d4d4);border-radius:2px 2px 0 0;"></div>
<div class="abs" style="left:759px;top:162.5px;width:22px;height:53.0px;background:#ececec;border:1px solid #5a5a5a;border-top-color:#f8f8f8;border-radius:2px;box-sizing:border-box;"></div>
<div class="abs" style="left:760px;top:162.5px;width:20px;height:6px;background:linear-gradient(180deg,#fcfcfc,#d4d4d4);border-radius:2px 2px 0 0;"></div>
<div class="abs" style="left:759px;top:217px;width:22px;height:53.5px;background:#ececec;border:1px solid #5a5a5a;border-top-color:#f8f8f8;border-radius:2px;box-sizing:border-box;"></div>
<div class="abs" style="left:760px;top:217px;width:20px;height:6px;background:linear-gradient(180deg,#fcfcfc,#d4d4d4);border-radius:2px 2px 0 0;"></div>
<div class="abs" style="left:759px;top:272px;width:22px;height:37.5px;background:#ececec;border:1px solid #5a5a5a;border-top-color:#f8f8f8;border-radius:2px;box-sizing:border-box;"></div>
<div class="abs" style="left:760px;top:272px;width:20px;height:6px;background:linear-gradient(180deg,#fcfcfc,#d4d4d4);border-radius:2px 2px 0 0;"></div>
<svg class="abs" style="left:756px;top:74px" width="28" height="240" viewBox="756 74 28 240">
<g fill="none" stroke="#333" stroke-width="1.200" stroke-linecap="round">
<!-- history -->
<rect x="764.500" y="88" width="3.500" height="3" fill="#eee" stroke="#444" stroke-width=".9"/><rect x="764.500" y="92.500" width="3.500" height="3" fill="#eee" stroke="#444" stroke-width=".9"/><rect x="764.500" y="97" width="3.500" height="3" fill="#444" stroke="#444" stroke-width=".9"/>
<path d="M771 89.500C775.500 88.500 777.500 93 775 97.500L772 99.500" stroke-width="1.700"/><path d="M770 87.500l3 2l-3 2z" fill="#333" stroke="none"/>
<!-- actions -->
<rect x="763.500" y="108.500" width="14" height="11" fill="#d0d0d0" stroke="#444" stroke-width="1.100"/><path d="M767 110.500v7l7.500-3.500z" fill="#333" stroke="none"/>
<!-- tool presets -->
<path d="M765 155L776 143.500" stroke-width="2.200" stroke="#222"/><path d="M776 155L770 149" stroke-width="2" stroke="#333"/><path d="M764.500 142.500C766 141.500 768.500 142 769.500 144L771 147" stroke-width="1.800"/><path d="M774.500 141.500l2.500 2.500" stroke-width="2.300"/>
<!-- brushes -->
<path d="M766.500 171.500L769.500 178M774.500 171.500L771.500 178M770.500 170.500V177" stroke-width="1.700"/><rect x="767.500" y="178.500" width="6" height="7" fill="#e6e6e6" stroke="#222" stroke-width="1.400"/>
<!-- clone source -->
<path d="M770.500 194.500v5M765.500 201h10v3.500h-10z" stroke-width="1.400" fill="#888"/><rect x="764.500" y="194" width="4" height="3" fill="#ddd" stroke="#555" stroke-width=".8"/><path d="M765 207h11" stroke-width="1.200"/>
<!-- character -->
<path d="M776.500 231v12" stroke-width="1.100"/>
<!-- layer comps -->
<rect x="764.500" y="287" width="12.500" height="13" fill="#e4e4e4" stroke="#444" stroke-width="1.100"/><path d="M766.500 290h4M766.500 292.500h4" stroke-width="1"/><rect x="771.500" y="289" width="4" height="4" fill="#666" stroke="none"/><rect x="766" y="295" width="9.500" height="3" fill="#444" stroke="none"/>
</g>
<text x="762.800" y="243" font-size="15" fill="#222" >A</text>
<text x="765" y="263.500" font-size="14" font-weight="bold" fill="#444" >¶</text>
</svg>

<div class="abs" style="left:783px;top:74px;width:214px;height:186px;background:#ededed;"></div>
<div class="abs" style="left:783px;top:74px;width:214px;height:21px;background:linear-gradient(180deg,#f7f7f7,#d6d6d6);"></div>
<div class="abs" style="left:787.5px;top:82px;width:50.5px;height:13px;background:linear-gradient(180deg,#e9e9e9,#d3d3d3);border:1px solid #a3a3a3;border-bottom:0;border-radius:3px 3px 0 0;box-sizing:border-box;"></div>
<div class="t" style="left:791.0px;top:83.1px;font-size:9.5px;color:#222;transform:scaleX(0.920);transform-origin:0 0;">Навигатор</div>
<div class="abs" style="left:840px;top:82px;width:61px;height:13px;background:linear-gradient(180deg,#e9e9e9,#d3d3d3);border:1px solid #a3a3a3;border-bottom:0;border-radius:3px 3px 0 0;box-sizing:border-box;"></div>
<div class="t" style="left:844.5px;top:83.1px;font-size:9.5px;color:#222;transform:scaleX(0.907);transform-origin:0 0;">Гистограмма</div>
<div class="abs" style="left:903px;top:81px;width:38px;height:15px;background:#ededed;border:1px solid #9c9c9c;border-bottom:0;border-radius:3px 3px 0 0;box-sizing:border-box;"></div>
<div class="t" style="left:907.5px;top:83.1px;font-size:9.5px;color:#222;transform:scaleX(0.874);transform-origin:0 0;">Инфо</div>
<svg class="abs" style="left:933.3px;top:85.6px" width="6" height="6"><path d="M.5 .5l4.5 4.5M5 .5L.5 5" stroke="#666" stroke-width="1"/></svg>
<div class="abs" style="left:783px;top:95px;width:214px;height:1px;background:#a8a8a8;"></div>
<div class="abs" style="left:904px;top:95px;width:36px;height:1px;background:#ededed;"></div>
<svg class="abs" style="left:979px;top:77px" width="16" height="8"><path d="M0 4.5h4" stroke="#999" stroke-width="1.2"/><path d="M9.5 1.5l5 5M14.5 1.5l-5 5" stroke="#999" stroke-width="1.1"/></svg>
<svg class="abs" style="left:984px;top:89px" width="12" height="7"><path d="M0 2h3.4L1.7 4.5z" fill="#444"/><path d="M5 .5h6M5 3h6M5 5.5h6" stroke="#555" stroke-width="1"/></svg>
<div class="t" style="left:800.0px;top:100.5px;font-size:8.6px;color:#333;transform:scaleX(0.761);transform-origin:0 0;">K :</div>
<div class="t" style="left:788.0px;top:135.0px;font-size:8.6px;color:#333;transform:scaleX(0.938);transform-origin:0 0;">8-бит</div>
<div class="t" style="left:903.0px;top:100.5px;font-size:8.6px;color:#333;transform:scaleX(0.864);transform-origin:0 0;">C :</div>
<div class="t" style="left:902.0px;top:109.3px;font-size:8.6px;color:#333;transform:scaleX(0.879);transform-origin:0 0;">M :</div>
<div class="t" style="left:903.0px;top:118.0px;font-size:8.6px;color:#333;transform:scaleX(0.917);transform-origin:0 0;">Y :</div>
<div class="t" style="left:903.0px;top:126.8px;font-size:8.6px;color:#333;transform:scaleX(0.903);transform-origin:0 0;">K :</div>
<div class="t" style="left:892.5px;top:135.0px;font-size:8.6px;color:#333;transform:scaleX(0.938);transform-origin:0 0;">8-бит</div>
<div class="t" style="left:799.0px;top:152.5px;font-size:8.6px;color:#333;transform:scaleX(0.856);transform-origin:0 0;">X :</div>
<div class="t" style="left:799.0px;top:160.7px;font-size:8.6px;color:#333;transform:scaleX(0.869);transform-origin:0 0;">Y :</div>
<div class="t" style="left:901.0px;top:152.5px;font-size:8.6px;color:#333;transform:scaleX(0.908);transform-origin:0 0;">Ш :</div>
<div class="t" style="left:903.5px;top:160.7px;font-size:8.6px;color:#333;transform:scaleX(0.856);transform-origin:0 0;">В :</div>
<svg class="abs" style="left:788.5px;top:110.5px" width="9" height="9"><path d="M1 8.5L4.5 5" stroke="#222" stroke-width="1.2"/><path d="M3.5 3l3 3M4.5 4.5L7.5 1.2" stroke="#222" stroke-width="1.8"/></svg>
<svg class="abs" style="left:893px;top:110.5px" width="9" height="9"><path d="M1 8.5L4.5 5" stroke="#222" stroke-width="1.2"/><path d="M3.5 3l3 3M4.5 4.5L7.5 1.2" stroke="#222" stroke-width="1.8"/></svg>
<svg class="abs" style="left:788.5px;top:157px" width="9" height="9"><path d="M3.5 0v7.5M0 3.5h7.5" stroke="#222" stroke-width="1"/><path d="M6 6.5h3l-1.5 2z" fill="#222"/></svg>
<svg class="abs" style="left:892.5px;top:157px" width="9" height="9"><rect x="1" y="2" width="6" height="6" fill="none" stroke="#222" stroke-width="1" stroke-dasharray="2 1"/><path d="M5 0.5h3.5v3.5" fill="none" stroke="#222" stroke-width="1"/></svg>
<div class="abs" style="left:887px;top:97px;width:1px;height:48px;background:#c2c2c2;"></div>
<div class="abs" style="left:887px;top:151px;width:1px;height:22px;background:#c2c2c2;"></div>
<div class="abs" style="left:784px;top:148.5px;width:210px;height:1px;background:#c2c2c2;"></div>
<div class="abs" style="left:784px;top:177px;width:210px;height:1px;background:#c2c2c2;"></div>
<div class="abs" style="left:784px;top:199.5px;width:210px;height:1px;background:#c2c2c2;"></div>
<div class="t" style="left:791.0px;top:183.8px;font-size:8.6px;color:#333;transform:scaleX(0.922);transform-origin:0 0;">Док: 1,99M/1,99M</div>
<div class="t" style="left:791.0px;top:207.5px;font-size:8.6px;color:#333;transform:scaleX(0.946);transform-origin:0 0;">Рисование прямоугольной области или</div>
<div class="t" style="left:791.0px;top:217.0px;font-size:8.6px;color:#333;transform:scaleX(0.929);transform-origin:0 0;">перемещение границы.  Дополнительные</div>
<div class="t" style="left:791.0px;top:225.7px;font-size:8.6px;color:#333;transform:scaleX(0.951);transform-origin:0 0;">возможности: с клавишами Shift, Alt и Ctrl.</div>
<div class="abs" style="left:783px;top:260px;width:214px;height:2px;background:#777;"></div>
<div class="abs" style="left:783px;top:262px;width:214px;height:99px;background:#ededed;"></div>
<div class="abs" style="left:783px;top:260.5px;width:214px;height:21px;background:linear-gradient(180deg,#f7f7f7,#d6d6d6);"></div>
<div class="abs" style="left:787.5px;top:267.5px;width:35.0px;height:15px;background:#ededed;border:1px solid #9c9c9c;border-bottom:0;border-radius:3px 3px 0 0;box-sizing:border-box;"></div>
<div class="t" style="left:791.8px;top:269.6px;font-size:9.5px;color:#222;transform:scaleX(0.855);transform-origin:0 0;">Цвет</div>
<svg class="abs" style="left:813.8px;top:272.1px" width="6" height="6"><path d="M.5 .5l4.5 4.5M5 .5L.5 5" stroke="#666" stroke-width="1"/></svg>
<div class="abs" style="left:824.5px;top:268.5px;width:45.5px;height:13px;background:linear-gradient(180deg,#e9e9e9,#d3d3d3);border:1px solid #a3a3a3;border-bottom:0;border-radius:3px 3px 0 0;box-sizing:border-box;"></div>
<div class="t" style="left:829.5px;top:269.6px;font-size:9.5px;color:#222;transform:scaleX(0.889);transform-origin:0 0;">Образцы</div>
<div class="abs" style="left:871.8px;top:268.5px;width:33.200000000000045px;height:13px;background:linear-gradient(180deg,#e9e9e9,#d3d3d3);border:1px solid #a3a3a3;border-bottom:0;border-radius:3px 3px 0 0;box-sizing:border-box;"></div>
<div class="t" style="left:876.8px;top:269.6px;font-size:9.5px;color:#222;transform:scaleX(0.848);transform-origin:0 0;">Стили</div>
<div class="abs" style="left:783px;top:281.5px;width:214px;height:1px;background:#a8a8a8;"></div>
<div class="abs" style="left:788.5px;top:281.5px;width:33.0px;height:1px;background:#ededed;"></div>
<svg class="abs" style="left:979px;top:263.5px" width="16" height="8"><path d="M0 4.5h4" stroke="#999" stroke-width="1.2"/><path d="M9.5 1.5l5 5M14.5 1.5l-5 5" stroke="#999" stroke-width="1.1"/></svg>
<svg class="abs" style="left:984px;top:275.5px" width="12" height="7"><path d="M0 2h3.4L1.7 4.5z" fill="#444"/><path d="M5 .5h6M5 3h6M5 5.5h6" stroke="#555" stroke-width="1"/></svg>
<div class="abs" style="left:798px;top:299px;width:15.5px;height:15px;background:#fff;border:1px solid #cfcfcf;box-sizing:border-box;"></div>
<div class="abs" style="left:788px;top:289px;width:16.5px;height:16px;background:#000;border:1px solid #fff;outline:1px solid #555;box-sizing:border-box;"></div>
<div class="t" style="left:817.0px;top:288.0px;font-size:8.6px;color:#333;transform:scaleX(0.784);transform-origin:0 0;">K</div>
<div class="abs" style="left:826px;top:290.5px;width:79px;height:5px;background:linear-gradient(90deg,#fff,#000);border:1px solid #999;border-right-color:#eee;border-bottom-color:#eee;box-sizing:border-box;"></div>
<svg class="abs" style="left:901.5px;top:295.5px" width="8" height="8"><path d="M3.5 .8L6.6 4.2V6.8H.6V4.2z" fill="#f4fff4" stroke="#3c9a3c" stroke-width="1"/></svg>
<div class="inp" style="left:910px;top:288.5px;width:24px;height:13px;border-color:#c5c5c5;"></div>
<div class="t" style="left:915.0px;top:290.0px;font-size:8.6px;color:#333;transform:scaleX(0.941);transform-origin:0 0;">100</div>
<div class="t" style="left:935.0px;top:288.0px;font-size:8.6px;color:#333;transform:scaleX(0.915);transform-origin:0 0;">%</div>
<div class="abs" style="left:786px;top:343.5px;width:155.5px;height:11.5px;background:linear-gradient(180deg,rgba(255,255,255,.35) 0,rgba(255,255,255,0) 35%,rgba(0,0,0,0) 55%,rgba(0,0,0,.55) 100%),linear-gradient(90deg,#d81818 0,#e8b010 9%,#e8e010 15%,#4aa820 26%,#10a040 32%,#10a8a0 44%,#1898d8 52%,#1848b0 62%,#302088 68%,#a01888 78%,#d81868 88%,#d01828 95%);"></div>
<div class="abs" style="left:935px;top:343.5px;width:6.5px;height:5.5px;background:#fff;"></div><div class="abs" style="left:935px;top:349px;width:6.5px;height:6px;background:#000;"></div>
<div class="abs" style="left:783px;top:361px;width:214px;height:2px;background:#777;"></div>
<div class="abs" style="left:783px;top:363px;width:214px;height:397px;background:#ededed;"></div>
<div class="abs" style="left:783px;top:363px;width:214px;height:21px;background:linear-gradient(180deg,#f7f7f7,#d6d6d6);"></div>
<div class="abs" style="left:787.5px;top:370px;width:36.5px;height:15px;background:#ededed;border:1px solid #9c9c9c;border-bottom:0;border-radius:3px 3px 0 0;box-sizing:border-box;"></div>
<div class="t" style="left:791.8px;top:372.1px;font-size:9.5px;color:#222;transform:scaleX(0.822);transform-origin:0 0;">Слои</div>
<svg class="abs" style="left:814.5999999999999px;top:374.6px" width="6" height="6"><path d="M.5 .5l4.5 4.5M5 .5L.5 5" stroke="#666" stroke-width="1"/></svg>
<div class="abs" style="left:825.5px;top:371px;width:39.5px;height:13px;background:linear-gradient(180deg,#e9e9e9,#d3d3d3);border:1px solid #a3a3a3;border-bottom:0;border-radius:3px 3px 0 0;box-sizing:border-box;"></div>
<div class="t" style="left:830.0px;top:372.1px;font-size:9.5px;color:#222;transform:scaleX(0.869);transform-origin:0 0;">Каналы</div>
<div class="abs" style="left:866.8px;top:371px;width:43.200000000000045px;height:13px;background:linear-gradient(180deg,#e9e9e9,#d3d3d3);border:1px solid #a3a3a3;border-bottom:0;border-radius:3px 3px 0 0;box-sizing:border-box;"></div>
<div class="t" style="left:871.3px;top:372.1px;font-size:9.5px;color:#222;transform:scaleX(0.904);transform-origin:0 0;">Контуры</div>
<div class="abs" style="left:783px;top:384px;width:214px;height:1px;background:#a8a8a8;"></div>
<div class="abs" style="left:788.5px;top:384px;width:34.5px;height:1px;background:#ededed;"></div>
<svg class="abs" style="left:979px;top:366px" width="16" height="8"><path d="M0 4.5h4" stroke="#999" stroke-width="1.2"/><path d="M9.5 1.5l5 5M14.5 1.5l-5 5" stroke="#999" stroke-width="1.1"/></svg>
<svg class="abs" style="left:984px;top:378px" width="12" height="7"><path d="M0 2h3.4L1.7 4.5z" fill="#444"/><path d="M5 .5h6M5 3h6M5 5.5h6" stroke="#555" stroke-width="1"/></svg>
<div class="inp" style="left:785.5px;top:387.5px;width:125.5px;height:14px;border-color:#c3c3c3;"></div>
<div class="t" style="left:789.0px;top:389.5px;font-size:8.6px;color:#9a9a9a;transform:scaleX(0.890);transform-origin:0 0;">Нормальный</div>
<svg class="abs" style="left:903px;top:392.5px" width="7" height="5"><path d="M.5 .8L3.3 3.6L6.1 .8" fill="none" stroke="#999" stroke-width="1.2"/></svg>
<div class="t" style="left:915.0px;top:389.5px;font-size:8.6px;color:#a8a8a8;transform:scaleX(0.906);transform-origin:0 0;">Непрозр.:</div>
<div class="t" style="left:788.8px;top:409.0px;font-size:8.6px;color:#a8a8a8;transform:scaleX(0.945);transform-origin:0 0;">Закрепить:</div>
<div class="t" style="left:919.5px;top:409.0px;font-size:8.6px;color:#a8a8a8;transform:scaleX(0.859);transform-origin:0 0;">Заливка:</div>
<div class="inp" style="left:953.5px;top:387.5px;width:28px;height:14px;border-color:#c3c3c3;"></div>
<div class="abs" style="left:981.5px;top:387.5px;width:11.5px;height:14px;border:1px solid #c8c8c8;border-left:0;background:#f3f3f3;box-sizing:border-box;"></div>
<svg class="abs" style="left:985.5px;top:392.5px" width="4" height="5"><path d="M0 0L3 2.2L0 4.4z" fill="#aaa"/></svg>
<div class="t" style="left:958.0px;top:389.5px;font-size:8.6px;color:#555;transform:scaleX(0.864);transform-origin:0 0;">100%</div>
<div class="inp" style="left:953.5px;top:407.5px;width:28px;height:14px;border-color:#c3c3c3;"></div>
<div class="abs" style="left:981.5px;top:407.5px;width:11.5px;height:14px;border:1px solid #c8c8c8;border-left:0;background:#f3f3f3;box-sizing:border-box;"></div>
<svg class="abs" style="left:985.5px;top:412.5px" width="4" height="5"><path d="M0 0L3 2.2L0 4.4z" fill="#aaa"/></svg>
<div class="t" style="left:958.0px;top:409.5px;font-size:8.6px;color:#555;transform:scaleX(0.864);transform-origin:0 0;">100%</div>
<div class="abs" style="left:784px;top:403px;width:210px;height:1px;background:#c8c8c8;"></div>
<svg class="abs" style="left:835px;top:409px" width="50" height="11"><rect x=".5" y=".5" width="8.5" height="8.5" fill="#f8f8f8" stroke="#555" stroke-width=".9"/><rect x="1" y="1" width="4" height="4" fill="#ddd"/><rect x="5" y="5" width="4" height="4" fill="#ddd"/><path d="M14.5 9.5c2-1 3-2.5 4-4l3.5-4.5" stroke="#666" stroke-width="1.6" fill="none"/><path d="M31 0v10M26 5h10" stroke="#444" stroke-width="1.1"/><path d="M31 -0.5l-1.6 2h3.2zM31 10.5l-1.6-2h3.2zM25.5 5l2-1.6v3.2zM36.5 5l-2-1.6v3.2z" fill="#444"/><rect x="40.5" y="4.5" width="7" height="5.5" fill="#555"/><path d="M42 4.5V3a2 2 0 014 0v1.5" fill="none" stroke="#555" stroke-width="1.2"/></svg>
<div class="abs" style="left:784px;top:423px;width:210px;height:1px;background:#d4d4d4;"></div>
<div class="abs" style="left:784px;top:455px;width:200px;height:1px;background:#d0d0d0;"></div>
<div class="abs" style="left:800.5px;top:424px;width:183.5px;height:31px;background:#3b94f2;"></div>
<div class="abs" style="left:786.5px;top:432.5px;width:11px;height:12.5px;background:#f8f8f8;border:1px solid #c4c4c4;box-sizing:border-box;"></div>
<svg class="abs" style="left:787.5px;top:435px" width="9" height="7"><path d="M0 3.5C2 .5 7 .5 9 3.5C7 6.5 2 6.5 0 3.5z" fill="#222"/><circle cx="4.5" cy="3.3" r="1.3" fill="#888"/></svg>
<svg class="abs" style="left:803.5px;top:426px" width="20.5" height="25.5" viewBox="0 0 20.5 25.5"><rect width="20.5" height="25.5" fill="#05070c"/><ellipse cx="10.2" cy="9" rx="4.4" ry="5.4" fill="#9fb4cc"/><path d="M5.6 7.5c0-4.5 9.4-4.5 9.4 0c-1.5-2-7.5-2-9.4 0z" fill="#1b2230"/><path d="M1.5 25.5c0-6 3-8.5 6-9.5l2.7 3.5l2.7-3.5c3 1 6 3.500 6 9.500z" fill="#202a3a"/><path d="M8 15.500l2.200 3.500l2.200-3.500z" fill="#d5dfea"/><path d="M9.600 17.500h1.200l.8 6-1.400 1.500-1.400-1.500z" fill="#3a4658"/></svg>
<div class="t" style="left:830.0px;top:435.3px;font-size:8.6px;color:#fff;transform:scaleX(0.939);transform-origin:0 0;font-style:italic;">Задний план</div>
<svg class="abs" style="left:963.5px;top:434.5px" width="8" height="10"><rect x=".5" y="4" width="7" height="5.5" fill="#fff" stroke="#345" stroke-width=".6"/><path d="M2 4V2.800a2 2 0 014 0V4" fill="none" stroke="#fff" stroke-width="1.300"/><rect x="3.300" y="5.500" width="1.400" height="2.500" fill="#345"/></svg>
<div class="abs" style="left:985px;top:424px;width:9px;height:322px;background:#f1f1f1;border-left:1px solid #e0e0e0;box-sizing:border-box;"></div>
<svg class="abs" style="left:987px;top:429px" width="6" height="4"><path d="M0 3.500L3 .3L6 3.500z" fill="#9a9a9a"/></svg>
<svg class="abs" style="left:987px;top:737.500px" width="6" height="4"><path d="M0 .3L3 3.500L6 .3z" fill="#777"/></svg>
<div class="abs" style="left:784px;top:746px;width:200px;height:1px;background:#bdbdbd;"></div>
<svg class="abs" style="left:839px;top:747px" width="160" height="13">
<rect x=".8" y="3" width="7.500" height="5" rx="2.500" fill="none" stroke="#555" stroke-width="1.200"/><rect x="5.500" y="3" width="7.500" height="5" rx="2.500" fill="none" stroke="#555" stroke-width="1.200"/>
<text x="24.500" y="9.500" font-size="10" font-style="italic" style="font-family:'Liberation Serif','DejaVu Serif',serif" fill="#555">fx</text><rect x="35.500" y="9" width="1.200" height="1.200" fill="#444"/>
<rect x="45" y="1.500" width="10.500" height="8.500" fill="#ddd" stroke="#666" stroke-width=".9"/><circle cx="50.200" cy="5.700" r="2.700" fill="#fff" stroke="#777" stroke-width=".7"/>
<circle cx="70.500" cy="5.500" r="4.300" fill="#fff" stroke="#333" stroke-width="1"/><path d="M67.500 8.500A4.300 4.300 0 0173.500 2.500z" fill="#333"/><rect x="77.500" y="9" width="1.300" height="1.300" fill="#222"/>
<path d="M88.500 2h3l1 1.200h4.500v6.500h-8.500z" fill="#e4e4e4" stroke="#666" stroke-width=".9"/>
<rect x="109.500" y="2" width="8" height="8" fill="#f6f6f6" stroke="#555" stroke-width=".9"/><rect x="109.500" y="6.500" width="3.500" height="3.500" fill="#555"/>
<path d="M131.500 3.500h6.500l-.7 7h-5.100z" fill="#e8e8e8" stroke="#666" stroke-width=".9"/><path d="M130.500 3h8.500M133 1.500h3.500" stroke="#666" stroke-width="1"/>
<path d="M155.500 4v1M153 6.500v1M155.500 6.500v1M150.500 9v1M153 9v1M155.500 9v1" stroke="#aaa" stroke-width="1.200"/>
</svg><div class="abs" style="left:274px;top:35px;width:215px;height:337.5px;background:rgba(0,0,0,.3);filter:blur(1.5px);"></div>
<div class="abs" style="left:271px;top:32px;width:215px;height:337.5px;background:#f0f0f0;border:1px solid #9a9a9a;box-sizing:border-box;"></div>
<div class="t" style="left:283.4px;top:36.9px;font-size:9.5px;color:#a3a3a3;transform:scaleX(0.950);transform-origin:0 0;">Последний фильтр</div>
<div class="t" style="left:446.7px;top:36.9px;font-size:9.5px;color:#a3a3a3;transform:scaleX(0.957);transform-origin:0 0;">Ctrl+F</div>
<div class="t" style="left:283.4px;top:57.0px;font-size:9.5px;color:#151515;transform:scaleX(0.948);transform-origin:0 0;">Преобразовать для смарт-фильтров</div>
<div class="t" style="left:283.4px;top:76.9px;font-size:9.5px;color:#151515;transform:scaleX(0.934);transform-origin:0 0;">Извлечь...</div>
<div class="t" style="left:429.2px;top:76.9px;font-size:9.5px;color:#151515;transform:scaleX(0.982);transform-origin:0 0;">Alt+Ctrl+X</div>
<div class="t" style="left:283.4px;top:90.4px;font-size:9.5px;color:#151515;transform:scaleX(0.928);transform-origin:0 0;">Галерея фильтров...</div>
<div class="t" style="left:283.4px;top:103.8px;font-size:9.5px;color:#151515;transform:scaleX(0.907);transform-origin:0 0;">Пластика...</div>
<div class="t" style="left:421.3px;top:103.8px;font-size:9.5px;color:#151515;transform:scaleX(0.984);transform-origin:0 0;">Shift+Ctrl+X</div>
<div class="t" style="left:283.4px;top:117.1px;font-size:9.5px;color:#151515;transform:scaleX(0.963);transform-origin:0 0;">Конструктор узоров...</div>
<div class="t" style="left:404.0px;top:117.1px;font-size:9.5px;color:#151515;transform:scaleX(0.998);transform-origin:0 0;">Alt+Shift+Ctrl+X</div>
<div class="t" style="left:283.4px;top:130.4px;font-size:9.5px;color:#a3a3a3;transform:scaleX(0.947);transform-origin:0 0;">Исправление перспективы...</div>
<div class="t" style="left:428.7px;top:130.4px;font-size:9.5px;color:#a3a3a3;transform:scaleX(0.993);transform-origin:0 0;">Alt+Ctrl+V</div>
<div class="t" style="left:283.4px;top:151.2px;font-size:9.5px;color:#151515;transform:scaleX(0.930);transform-origin:0 0;">Видео</div>
<svg class="abs" style="left:475px;top:150.8px" width="5" height="7"><path d="M0 0L4.2 3.5L0 7z" fill="#111"/></svg>
<div class="t" style="left:283.4px;top:164.5px;font-size:9.5px;color:#151515;transform:scaleX(0.950);transform-origin:0 0;">Имитация</div>
<svg class="abs" style="left:475px;top:164.1px" width="5" height="7"><path d="M0 0L4.2 3.5L0 7z" fill="#111"/></svg>
<div class="t" style="left:283.4px;top:177.8px;font-size:9.5px;color:#151515;transform:scaleX(0.957);transform-origin:0 0;">Искажение</div>
<svg class="abs" style="left:475px;top:177.4px" width="5" height="7"><path d="M0 0L4.2 3.5L0 7z" fill="#111"/></svg>
<div class="t" style="left:283.4px;top:191.1px;font-size:9.5px;color:#151515;transform:scaleX(0.955);transform-origin:0 0;">Оформление</div>
<svg class="abs" style="left:475px;top:190.7px" width="5" height="7"><path d="M0 0L4.2 3.5L0 7z" fill="#111"/></svg>
<div class="t" style="left:283.4px;top:204.4px;font-size:9.5px;color:#151515;transform:scaleX(0.901);transform-origin:0 0;">Размытие</div>
<svg class="abs" style="left:475px;top:204.0px" width="5" height="7"><path d="M0 0L4.2 3.5L0 7z" fill="#111"/></svg>
<div class="t" style="left:283.4px;top:217.7px;font-size:9.5px;color:#151515;transform:scaleX(0.927);transform-origin:0 0;">Резкость</div>
<svg class="abs" style="left:475px;top:217.3px" width="5" height="7"><path d="M0 0L4.2 3.5L0 7z" fill="#111"/></svg>
<div class="t" style="left:283.4px;top:230.9px;font-size:9.5px;color:#151515;transform:scaleX(0.955);transform-origin:0 0;">Рендеринг</div>
<svg class="abs" style="left:475px;top:230.5px" width="5" height="7"><path d="M0 0L4.2 3.5L0 7z" fill="#111"/></svg>
<div class="t" style="left:283.4px;top:244.2px;font-size:9.5px;color:#151515;transform:scaleX(0.928);transform-origin:0 0;">Стилизация</div>
<svg class="abs" style="left:475px;top:243.8px" width="5" height="7"><path d="M0 0L4.2 3.5L0 7z" fill="#111"/></svg>
<div class="t" style="left:283.4px;top:257.5px;font-size:9.5px;color:#151515;transform:scaleX(0.890);transform-origin:0 0;">Текстура</div>
<svg class="abs" style="left:475px;top:257.1px" width="5" height="7"><path d="M0 0L4.2 3.5L0 7z" fill="#111"/></svg>
<div class="t" style="left:283.4px;top:270.8px;font-size:9.5px;color:#151515;transform:scaleX(0.979);transform-origin:0 0;">Штрихи</div>
<svg class="abs" style="left:475px;top:270.4px" width="5" height="7"><path d="M0 0L4.2 3.5L0 7z" fill="#111"/></svg>
<div class="t" style="left:283.4px;top:284.1px;font-size:9.5px;color:#151515;transform:scaleX(0.961);transform-origin:0 0;">Шум</div>
<svg class="abs" style="left:475px;top:283.7px" width="5" height="7"><path d="M0 0L4.2 3.5L0 7z" fill="#111"/></svg>
<div class="t" style="left:283.4px;top:297.3px;font-size:9.5px;color:#151515;transform:scaleX(0.921);transform-origin:0 0;">Эскиз</div>
<svg class="abs" style="left:475px;top:296.9px" width="5" height="7"><path d="M0 0L4.2 3.5L0 7z" fill="#111"/></svg>
<div class="t" style="left:283.4px;top:310.6px;font-size:9.5px;color:#151515;transform:scaleX(0.967);transform-origin:0 0;">Другие</div>
<svg class="abs" style="left:475px;top:310.2px" width="5" height="7"><path d="M0 0L4.2 3.5L0 7z" fill="#111"/></svg>
<div class="t" style="left:283.4px;top:330.9px;font-size:9.5px;color:#151515;transform:scaleX(0.899);transform-origin:0 0;">&lt;&lt;&lt;МАСТЕРА РЕТУШИ &amp; ГРАВИРОВКИ&gt;&gt;&gt;</div>
<svg class="abs" style="left:475px;top:330.5px" width="5" height="7"><path d="M0 0L4.2 3.5L0 7z" fill="#111"/></svg>
<div class="t" style="left:283.4px;top:344.3px;font-size:9.5px;color:#151515;transform:scaleX(0.945);transform-origin:0 0;">Digimarc</div>
<svg class="abs" style="left:475px;top:343.9px" width="5" height="7"><path d="M0 0L4.2 3.5L0 7z" fill="#111"/></svg>
<div class="t" style="left:283.4px;top:357.5px;font-size:9.5px;color:#151515;transform:scaleX(0.907);transform-origin:0 0;">MBK Filters</div>
<svg class="abs" style="left:475px;top:357.1px" width="5" height="7"><path d="M0 0L4.2 3.5L0 7z" fill="#111"/></svg>
<div class="abs" style="left:273px;top:51px;width:210px;height:1px;background:#c9c9c9;border-bottom:1px solid #fbfbfb;"></div>
<div class="abs" style="left:273px;top:70.5px;width:210px;height:1px;background:#c9c9c9;border-bottom:1px solid #fbfbfb;"></div>
<div class="abs" style="left:273px;top:144.5px;width:210px;height:1px;background:#c9c9c9;border-bottom:1px solid #fbfbfb;"></div>
<div class="abs" style="left:273px;top:322.5px;width:210px;height:1px;background:#c9c9c9;border-bottom:1px solid #fbfbfb;"></div><!-- bottom remnants -->
<div class="abs" style="left:0;top:768px;width:3px;height:32px;background:#1d3e6c;"></div>
<div class="abs" style="left:996px;top:767px;width:4px;height:33px;background:linear-gradient(90deg,#5e82ad,#254a7c);"></div>
</body>
</html>
